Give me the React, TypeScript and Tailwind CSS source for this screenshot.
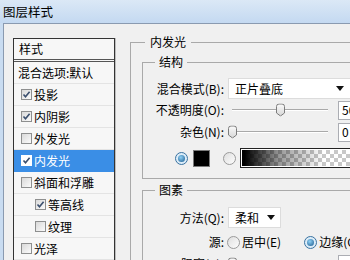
import type { ReactNode } from 'react';

type StyleItem = {
  label: string;
  checked: boolean;
  indent?: boolean;
  active?: boolean;
};

const styleItems: StyleItem[] = [
  { label: '投影', checked: true },
  { label: '内阴影', checked: true },
  { label: '外发光', checked: false },
  { label: '内发光', checked: true, active: true },
  { label: '斜面和浮雕', checked: false },
  { label: '等高线', checked: true, indent: true },
  { label: '纹理', checked: false, indent: true },
  { label: '光泽', checked: false },
];

function CheckBox({ checked, active }: { checked: boolean; active?: boolean }) {
  return (
    <span
      className={`flex h-[11px] w-[11px] shrink-0 items-center justify-center border ${
        active ? 'border-white bg-white' : 'border-[#8e8f8f] bg-gradient-to-br from-[#d9d9d9] to-[#fbfbfb]'
      }`}
    >
      {checked && (
        <svg width="9" height="9" viewBox="0 0 9 9">
          <path d="M1.5 4.5 L3.5 6.8 L7.6 1.8" fill="none" stroke="#3b4f6e" strokeWidth="1.6" />
        </svg>
      )}
    </span>
  );
}

function Radio({ selected, className = '' }: { selected?: boolean; className?: string }) {
  if (selected) {
    return (
      <span
        className={`flex h-[13px] w-[13px] shrink-0 items-center justify-center rounded-full border border-[#3a72a0] bg-[#dcecf8] ${className}`}
      >
        <span className="h-[7px] w-[7px] rounded-full bg-[radial-gradient(circle_at_40%_35%,#8fd0f4,#1a5a8e)]" />
      </span>
    );
  }
  return (
    <span
      className={`block h-[13px] w-[13px] shrink-0 rounded-full border border-[#9a9a9a] bg-gradient-to-br from-[#dedede] to-[#fdfdfd] ${className}`}
    />
  );
}

function Arrow() {
  return (
    <svg width="8" height="5" viewBox="0 0 8 5">
      <path d="M0 0 H8 L4 5 Z" fill="#111" />
    </svg>
  );
}

function Thumb() {
  return (
    <svg width="9" height="13" viewBox="0 0 9 13">
      <defs>
        <linearGradient id="thumbFill" x1="0" y1="0" x2="0" y2="1">
          <stop offset="0" stopColor="#fbfbfb" />
          <stop offset="1" stopColor="#d6d6d6" />
        </linearGradient>
      </defs>
      <path
        d="M0.5 3 A2.5 2.5 0 0 1 3 0.5 H6 A2.5 2.5 0 0 1 8.5 3 V9.5 L4.5 12.5 L0.5 9.5 Z"
        fill="url(#thumbFill)"
        stroke="#7c7c7c"
      />
    </svg>
  );
}

function Slider({ value }: { value: number }) {
  return (
    <div className="relative ml-[6px] flex h-full w-[100px] items-center">
      <div className="mx-[2px] h-0 w-full border-t border-b border-t-[#a9a9a9] border-b-white" />
      <div className="absolute top-1/2 -translate-y-1/2" style={{ left: `${value * 0.96 - 2.5}px` }}>
        <Thumb />
      </div>
    </div>
  );
}

function Label({ children }: { children: ReactNode }) {
  return <span className="w-[81px] shrink-0 text-right">{children}</span>;
}

function NumberBox({ value }: { value: string }) {
  return (
    <div className="ml-[8px] flex h-[19px] w-[40px] items-center border border-[#abadb3] bg-white pl-[3px]">
      {value}
    </div>
  );
}

export default function App() {
  return (
    <div className="h-[260px] w-[350px] overflow-hidden bg-[#c9dcf1] font-['Noto_Sans_CJK_SC',sans-serif] text-[12px] leading-[16px] text-black">
      <div className="flex h-[23px] items-center bg-gradient-to-b from-[#dbe8f6] to-[#c4d9f1] pl-[3px] text-[12.5px]">
        图层样式
      </div>

      <div className="ml-[3px] flex h-full items-start border-t border-l border-[#8a9ab0] bg-[#f0f0f0] pt-[14px] pl-[9px]">
        {/* style list */}
        <div className="w-[102px] shrink-0 border border-[#333] bg-[#f7f7f7] shadow-[1px_0_0_#bdbdbd]">
          <div className="flex h-[23px] items-center border-b-[3px] border-double border-[#555] pl-[5px]">样式</div>
          <div className="flex h-[22px] items-center border-b border-[#e4e4e4] pl-[4px]">混合选项:默认</div>
          {styleItems.map((item) => (
            <div
              key={item.label}
              className={`flex h-[22px] items-center gap-[2px] border-b ${
                item.active ? 'border-[#3a8ee6] bg-[#3a8ee6] text-white' : 'border-[#e4e4e4]'
              } ${item.indent ? 'pl-[21px]' : 'pl-[7px]'}`}
            >
              <CheckBox checked={item.checked} active={item.active} />
              <span>{item.label}</span>
            </div>
          ))}
        </div>

        {/* settings */}
        <div className="-mt-[4px] ml-[15px]">
          <fieldset className="w-[240px] border border-[#a9a9a9] pb-[20px] pl-[11px]">
            <legend className="ml-[3px] px-[5px]">内发光</legend>

            <fieldset className="mt-[4px] w-[230px] border border-[#a9a9a9] pt-[8px] pb-[10px]">
              <legend className="ml-[12px] px-[4px]">结构</legend>

              <div className="flex h-[21px] items-center">
                <Label>混合模式(B):</Label>
                <div className="ml-[4px] flex h-[21px] w-[128px] items-center justify-between border border-[#dcdcdc] bg-white pr-[11px] pl-[6px]">
                  <span>正片叠底</span>
                  <Arrow />
                </div>
              </div>

              <div className="flex h-[22px] items-center">
                <Label>不透明度(O):</Label>
                <Slider value={50} />
                <NumberBox value="50" />
              </div>

              <div className="flex h-[22px] items-center">
                <Label>杂色(N):</Label>
                <Slider value={0} />
                <NumberBox value="0" />
              </div>

              <div className="mt-[5px] flex h-[20px] items-center pl-[32px]">
                <Radio selected />
                <span className="ml-[5px] h-[17px] w-[17px] border border-[#7a7a7a] bg-black" />
                <Radio className="ml-[13px]" />
                <div className="ml-[4px] h-[20px] w-[130px] border border-[#222] bg-white p-[1px]">
                  <div className="h-full w-full bg-[conic-gradient(#c8c8c8_25%,#ffffff_0_50%,#c8c8c8_0_75%,#ffffff_0)] bg-[length:8px_8px]">
                    <div className="h-full w-full bg-gradient-to-r from-black from-[2%] via-black/40 via-[30%] to-transparent to-[65%]" />
                  </div>
                </div>
              </div>
            </fieldset>

            <fieldset className="mt-[3px] w-[230px] border border-[#a9a9a9] pt-[9px] pb-[10px]">
              <legend className="ml-[12px] px-[4px]">图素</legend>

              <div className="flex h-[21px] items-center">
                <Label>方法(Q):</Label>
                <div className="ml-[4px] flex h-[21px] w-[53px] items-center justify-between border border-[#dcdcdc] bg-white pr-[5px] pl-[6px]">
                  <span>柔和</span>
                  <Arrow />
                </div>
              </div>

              <div className="mt-[3px] flex h-[22px] items-center">
                <Label>源:</Label>
                <Radio className="ml-[3px]" />
                <span className="ml-[2px]">居中(E)</span>
                <Radio selected className="ml-[23px]" />
                <span className="ml-[2px]">边缘(G)</span>
              </div>

              <div className="flex h-[22px] items-center">
                <Label>阻塞(C):</Label>
                <Slider value={0} />
                <NumberBox value="0" />
              </div>
            </fieldset>
          </fieldset>
        </div>
      </div>
    </div>
  );
}
